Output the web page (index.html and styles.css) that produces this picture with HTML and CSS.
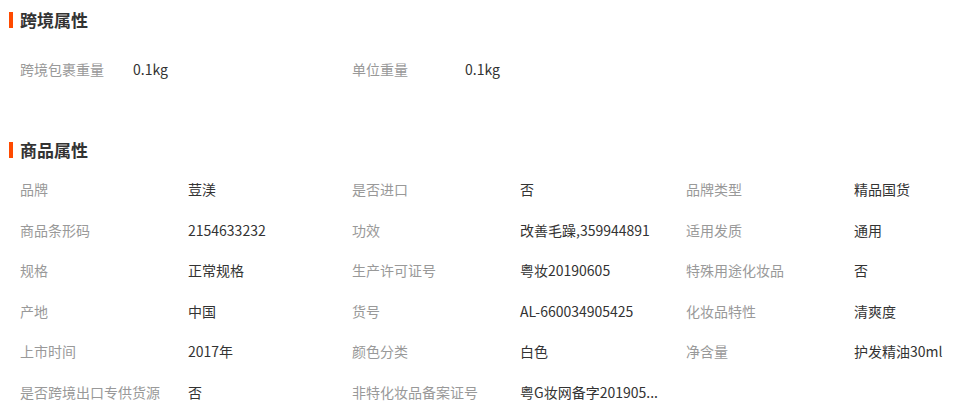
FILE: index.html
```html
<!DOCTYPE html>
<html lang="zh-CN">
<head>
    <meta charset="UTF-8">
    <title>商品属性</title>
    <link rel="stylesheet" href="styles.css">
</head>
<body>
<div class="m-attr m-cross">
    <h3 class="u-title">跨境属性</h3>
    <ul class="m-list m-list-2">
        <li><span class="u-key">跨境包裹重量</span><span class="u-val">0.1kg</span></li>
        <li><span class="u-key">单位重量</span><span class="u-val">0.1kg</span></li>
    </ul>
</div>
<div class="m-attr m-goods">
    <h3 class="u-title">商品属性</h3>
    <ul class="m-list m-list-3">
        <li><span class="u-key">品牌</span><span class="u-val">荳渼</span></li>
        <li><span class="u-key">是否进口</span><span class="u-val">否</span></li>
        <li><span class="u-key">品牌类型</span><span class="u-val">精品国货</span></li>
        <li><span class="u-key">商品条形码</span><span class="u-val">2154633232</span></li>
        <li><span class="u-key">功效</span><span class="u-val">改善毛躁,359944891</span></li>
        <li><span class="u-key">适用发质</span><span class="u-val">通用</span></li>
        <li><span class="u-key">规格</span><span class="u-val">正常规格</span></li>
        <li><span class="u-key">生产许可证号</span><span class="u-val">粤妆20190605</span></li>
        <li><span class="u-key">特殊用途化妆品</span><span class="u-val">否</span></li>
        <li><span class="u-key">产地</span><span class="u-val">中国</span></li>
        <li><span class="u-key">货号</span><span class="u-val">AL-660034905425</span></li>
        <li><span class="u-key">化妆品特性</span><span class="u-val">清爽度</span></li>
        <li><span class="u-key">上市时间</span><span class="u-val">2017年</span></li>
        <li><span class="u-key">颜色分类</span><span class="u-val">白色</span></li>
        <li><span class="u-key">净含量</span><span class="u-val">护发精油30ml</span></li>
        <li><span class="u-key">是否跨境出口专供货源</span><span class="u-val">否</span></li>
        <li><span class="u-key">非特化妆品备案证号</span><span class="u-val">粤G妆网备字201905...</span></li>
    </ul>
</div>
</body>
</html>
```

FILE: styles.css
```css
* {
    padding: 0;
    margin: 0;
}
body {
    font-family: "Microsoft YaHei", "Noto Sans CJK SC", sans-serif;
    font-size: 14px;
    color: #333;
    background: #fff;
}
ul {
    list-style: none;
}
.u-title {
    position: relative;
    padding-left: 20px;
    height: 22px;
    line-height: 22px;
    font-size: 17px;
    font-weight: bold;
    color: #333;
}
.u-title:before {
    content: "";
    position: absolute;
    left: 9px;
    top: 3px;
    width: 4px;
    height: 16px;
    background-color: #ff4a00;
}
.m-cross {
    padding-top: 9px;
}
.m-cross .u-title {
    margin-bottom: 18px;
}
.m-goods {
    padding-top: 50px;
}
.m-goods .u-title {
    margin-bottom: 8px;
}
.m-list {
    display: grid;
    padding-left: 20px;
}
.m-list li {
    display: flex;
    white-space: nowrap;
}
.m-list-2 {
    grid-template-columns: 332px 332px;
}
.m-list-2 li {
    height: 40px;
    line-height: 40px;
}
.m-list-2 .u-key {
    width: 113px;
}
.m-list-3 {
    grid-template-columns: 332px 334px 1fr;
}
.m-list-3 li {
    height: 40.6px;
    line-height: 40px;
}
.m-list-3 .u-key {
    width: 168px;
}
.u-key {
    color: #999;
}
.u-val {
    color: #333;
}
```
